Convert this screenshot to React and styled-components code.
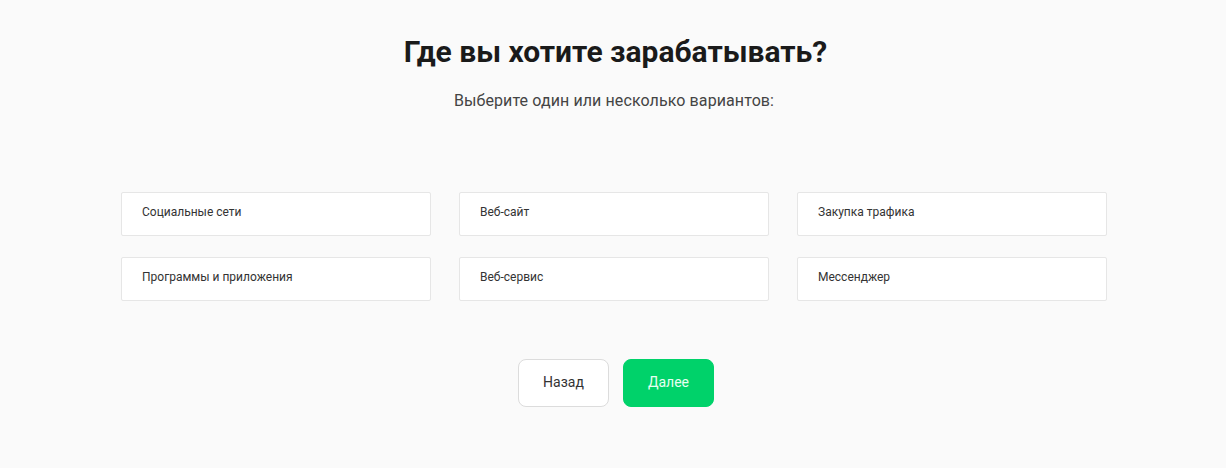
import styled, { createGlobalStyle } from 'styled-components';

const GlobalStyle = createGlobalStyle`
  body {
    margin: 0;
    background: #fafafa;
    font-family: Roboto, "Noto Sans", sans-serif;
  }
`;

const Page = styled.div`
  display: flex;
  flex-direction: column;
  align-items: center;
  padding: 34px 0 0 2px;
`;

const Title = styled.h1`
  margin: 0 0 0 3px;
  font-size: 30px;
  line-height: 36px;
  font-weight: 700;
  color: #1a1a1a;
`;

const Subtitle = styled.p`
  margin: 21px 0 0;
  font-size: 16px;
  line-height: 20px;
  letter-spacing: 0.1px;
  color: #444;
`;

const Grid = styled.div`
  display: grid;
  grid-template-columns: repeat(3, 310px);
  column-gap: 28px;
  row-gap: 21px;
  margin-top: 81px;
`;

const Option = styled.div`
  box-sizing: border-box;
  height: 44px;
  padding: 0 20px 4px;
  display: flex;
  align-items: center;
  background: #fff;
  border: 1px solid #e6e6e6;
  border-radius: 2px;
  font-size: 12px;
  color: #333;
`;

const Actions = styled.div`
  display: flex;
  gap: 14px;
  margin: 58px 0 0 4px;
`;

const Button = styled.button`
  box-sizing: border-box;
  width: 91px;
  height: 48px;
  border-radius: 8px;
  font-family: inherit;
  font-size: 14px;
  cursor: pointer;
  border: 1px solid ${({ $primary }) => ($primary ? '#00d26a' : '#dcdcdc')};
  background: ${({ $primary }) => ($primary ? '#00d26a' : '#fff')};
  color: ${({ $primary }) => ($primary ? '#e8fff2' : '#333')};
  padding-bottom: 4px;
`;

const options = [
  'Социальные сети',
  'Веб-сайт',
  'Закупка трафика',
  'Программы и приложения',
  'Веб-сервис',
  'Мессенджер',
];

export default function App() {
  return (
    <Page>
      <GlobalStyle />
      <Title>Где вы хотите зарабатывать?</Title>
      <Subtitle>Выберите один или несколько вариантов:</Subtitle>
      <Grid>
        {options.map((o) => (
          <Option key={o}>{o}</Option>
        ))}
      </Grid>
      <Actions>
        <Button>Назад</Button>
        <Button $primary>Далее</Button>
      </Actions>
    </Page>
  );
}
